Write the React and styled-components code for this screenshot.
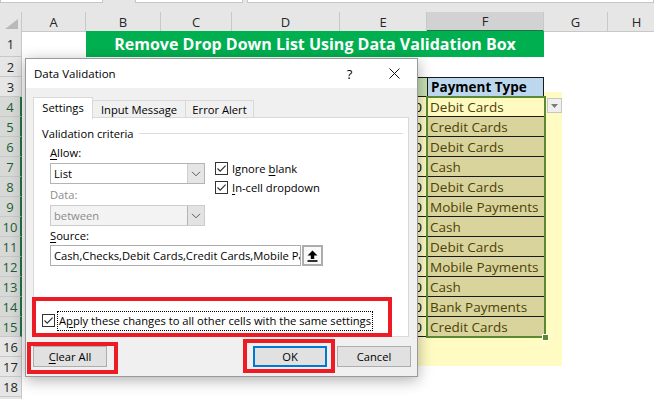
import React from "react";
import styled, { createGlobalStyle } from "styled-components";

const GlobalStyle = createGlobalStyle`
  html, body {
    margin: 0;
    padding: 0;
    background: #ffffff;
  }
  body {
    width: 654px;
    height: 399px;
    overflow: hidden;
    font-family: "Open Sans", "Noto Sans", sans-serif;
  }
  * {
    box-sizing: border-box;
  }
`;

const COLS = "22px 64px 75px 71px 108px 87px 117px 64px 58px";

const Sheet = styled.div`
  position: relative;
  width: 654px;
  height: 399px;
  overflow: hidden;
  background: #ffffff;
`;

const Grid = styled.div`
  position: relative;
  z-index: 1;
  display: flex;
  flex-direction: column;
`;

const TopStrip = styled.div`
  display: flex;
  height: 12px;
  background: #e6e6e6;
`;

const FormulaBox = styled.div`
  width: ${({ $w }) => ($w ? `${$w}px` : "auto")};
  flex: ${({ $w }) => ($w ? "none" : 1)};
  margin-left: ${({ $ml }) => $ml || 0}px;
  height: 3px;
  background: #ffffff;
  border: 1px solid #c6c6c6;
  border-top: none;
`;

const Row = styled.div`
  display: grid;
  grid-template-columns: ${COLS};
  height: ${({ $h }) => $h}px;
`;

const Corner = styled.div`
  display: flex;
  align-items: flex-end;
  justify-content: flex-end;
  padding: 0 3px 2px 0;
  background: #e6e6e6;
  border-right: 1px solid #c8c8c8;
  border-bottom: 1px solid #c8c8c8;
`;

const ColHeader = styled.div`
  display: flex;
  align-items: center;
  justify-content: center;
  background: ${({ $sel }) => ($sel ? "#d2d2d2" : "#e6e6e6")};
  border-right: 1px solid #c8c8c8;
  border-bottom: ${({ $sel }) => ($sel ? "2px solid #217346" : "1px solid #c8c8c8")};
  font-size: 13px;
  color: #262626;
`;

const RowHeader = styled.div`
  display: flex;
  align-items: center;
  justify-content: center;
  background: ${({ $sel }) => ($sel ? "#d6d9d6" : "#e6e6e6")};
  border-bottom: 1px solid #c8c8c8;
  border-right: ${({ $sel }) => ($sel ? "2px solid #217346" : "1px solid #c8c8c8")};
  font-size: 13px;
  color: ${({ $sel }) => ($sel ? "#1e5c38" : "#262626")};
`;

const Cell = styled.div`
  display: flex;
  align-items: center;
  justify-content: ${({ $align }) =>
    $align === "right" ? "flex-end" : $align === "center" ? "center" : "flex-start"};
  padding: 0 ${({ $pr }) => $pr || 3}px 0 3px;
  grid-column: ${({ $span }) => $span || "auto"};
  background: ${({ $bg }) => $bg || "transparent"};
  color: ${({ $color }) => $color || "#000000"};
  font-size: ${({ $size }) => $size || 13.5}px;
  font-weight: ${({ $bold }) => ($bold ? 700 : 400)};
  border-top: ${({ $bt }) => ($bt ? "1px solid #1a1a1a" : "none")};
  border-bottom: ${({ $bb }) => ($bb ? "1px solid #1a1a1a" : "none")};
  border-left: ${({ $bx }) => ($bx ? "1px solid #1a1a1a" : "none")};
  border-right: ${({ $bx }) => ($bx ? "1px solid #1a1a1a" : "none")};
  white-space: nowrap;
  overflow: hidden;
`;

const Highlight = styled.div`
  position: absolute;
  z-index: 0;
  left: 405px;
  top: 92px;
  width: 157px;
  height: 274px;
  background: #fffbc3;
`;

const Selection = styled.div`
  position: absolute;
  z-index: 2;
  left: 426px;
  top: 96px;
  width: 120px;
  height: 242px;
  border: 2px solid #5b8a32;
`;

const FillHandle = styled.div`
  position: absolute;
  right: -5px;
  bottom: -5px;
  width: 7px;
  height: 7px;
  background: #5b8a32;
  border: 1px solid #ffffff;
`;

const DropButton = styled.div`
  position: absolute;
  z-index: 2;
  left: 547px;
  top: 98px;
  width: 15px;
  height: 15px;
  display: flex;
  align-items: center;
  justify-content: center;
  background: #efefef;
  border: 1px solid #c6c6c6;
`;

const Dialog = styled.div`
  position: absolute;
  z-index: 5;
  left: 25px;
  top: 58px;
  width: 393px;
  height: 319px;
  display: flex;
  flex-direction: column;
  background: #f0f0f0;
  border: 1px solid #9a9a9a;
  box-shadow: 0 3px 14px rgba(0, 0, 0, 0.32);
  font-family: "Open Sans", "Noto Sans", sans-serif;
  font-size: 11.2px;
  color: #000000;
`;

const TitleBar = styled.div`
  display: flex;
  align-items: center;
  height: 29px;
  background: #ffffff;
  padding-left: 8px;
`;

const TitleText = styled.div`
  flex: 1;
  font-size: 11.5px;
`;

const TitleButton = styled.div`
  width: 45px;
  height: 29px;
  display: flex;
  align-items: center;
  justify-content: center;
  font-size: 13px;
`;

const Body = styled.div`
  flex: 1;
  display: flex;
  flex-direction: column;
  padding: 8px 8px 9px 7px;
`;

const TabRow = styled.div`
  display: flex;
  align-items: flex-end;
  height: 22px;
  position: relative;
  z-index: 1;
`;

const Tab = styled.div`
  width: ${({ $w }) => $w}px;
  height: ${({ $active }) => ($active ? 22 : 18)}px;
  display: flex;
  align-items: center;
  justify-content: center;
  background: ${({ $active }) => ($active ? "#ffffff" : "#f0f0f0")};
  border: 1px solid #d9d9d9;
  border-bottom: ${({ $active }) => ($active ? "none" : "1px solid #d9d9d9")};
  border-left: ${({ $first, $active }) => ($first || $active ? "1px solid #d9d9d9" : "none")};
  margin-bottom: ${({ $active }) => ($active ? -1 : 0)}px;
  padding-bottom: ${({ $active }) => ($active ? 2 : 0)}px;
`;

const Panel = styled.div`
  height: 220px;
  margin-top: -1px;
  display: flex;
  flex-direction: column;
  background: #ffffff;
  border: 1px solid #d9d9d9;
  padding: 8px 5px 6px 8px;
`;

const GroupTitle = styled.div`
  display: flex;
  align-items: center;
  gap: 5px;
  height: 14px;
  &::after {
    content: "";
    flex: 1;
    height: 1px;
    background: #dcdcdc;
  }
`;

const Criteria = styled.div`
  display: flex;
  flex-direction: column;
  margin-left: 8px;
`;

const CriteriaTop = styled.div`
  display: flex;
  gap: 10px;
`;

const LeftCol = styled.div`
  width: 155px;
  display: flex;
  flex-direction: column;
`;

const FieldLabel = styled.div`
  height: 14px;
  line-height: 14px;
  margin-top: ${({ $mt }) => $mt}px;
  color: ${({ $disabled }) => ($disabled ? "#8c8c8c" : "#000000")};
`;

const Combo = styled.div`
  display: flex;
  height: 21px;
  margin-top: 3px;
  background: ${({ $disabled }) => ($disabled ? "#f3f3f3" : "#ffffff")};
  border: 1px solid ${({ $disabled }) => ($disabled ? "#cccccc" : "#b4b4b4")};
  color: ${({ $disabled }) => ($disabled ? "#8c8c8c" : "#000000")};
`;

const ComboText = styled.div`
  flex: 1;
  display: flex;
  align-items: center;
  padding-left: 3px;
`;

const ComboArrow = styled.div`
  width: 17px;
  display: flex;
  align-items: center;
  justify-content: center;
  background: ${({ $disabled }) => ($disabled ? "#e3e3e3" : "#e5e5e5")};
  border-left: 1px solid ${({ $disabled }) => ($disabled ? "#b4b4b4" : "#cfcfcf")};
`;

const CheckList = styled.div`
  display: flex;
  flex-direction: column;
  padding-top: 19px;
`;

const CheckRow = styled.div`
  display: flex;
  align-items: center;
  gap: ${({ $gap }) => $gap || 4}px;
  height: ${({ $h }) => $h || 18}px;
`;

const Box = styled.div`
  width: 13px;
  height: 13px;
  flex: none;
  display: flex;
  align-items: center;
  justify-content: center;
  background: #ffffff;
  border: 1px solid #333333;
`;

const FocusText = styled.span`
  padding: 1px 1px 2px;
  border: 1px dotted #000000;
`;

const U = styled.span`
  text-decoration: underline;
  text-underline-offset: 2px;
`;

const SourceRow = styled.div`
  display: flex;
  gap: 1px;
  height: 21px;
  margin-top: 2px;
`;

const SourceInput = styled.div`
  width: 251px;
  display: flex;
  align-items: center;
  padding-left: 3px;
  background: #ffffff;
  border: 1px solid #adadad;
  white-space: nowrap;
  overflow: hidden;
`;

const RefButton = styled.div`
  width: 21px;
  display: flex;
  align-items: center;
  justify-content: center;
  background: #f9f9f9;
  border: 2px solid #adadad;
`;

const ApplyRow = styled(CheckRow)`
  margin-top: auto;
  height: 19px;
`;

const ButtonRow = styled.div`
  display: flex;
  gap: 10px;
  margin-top: 9px;
  margin-right: -2px;
`;

const Button = styled.div`
  width: 74px;
  height: 21px;
  display: flex;
  align-items: center;
  justify-content: center;
  margin-left: ${({ $push }) => ($push ? "auto" : "0")};
  background: #e1e1e1;
  border: ${({ $default }) => ($default ? "2px solid #0078d7" : "1px solid #adadad")};
`;

const Mark = styled.div`
  position: absolute;
  z-index: 10;
  left: ${({ $x }) => $x}px;
  top: ${({ $y }) => $y}px;
  width: ${({ $w }) => $w}px;
  height: ${({ $h }) => $h}px;
  border: 4px solid #ed1c24;
`;

const payments = [
  "Debit Cards",
  "Credit Cards",
  "Debit Cards",
  "Cash",
  "Debit Cards",
  "Mobile Payments",
  "Cash",
  "Debit Cards",
  "Mobile Payments",
  "Cash",
  "Bank Payments",
  "Credit Cards",
];

const amounts = ["1,200", "850", "2,300", "400", "1,750", "960", "320", "1,100", "2,540", "700", "3,200", "1,480"];

const letters = ["A", "B", "C", "D", "E", "F", "G", "H"];

const Check = () => (
  <svg width="11" height="11" viewBox="0 0 11 11">
    <path d="M1.5 5.5 L4.2 8.2 L9.6 2.6" fill="none" stroke="#333" strokeWidth="1.2" />
  </svg>
);

const Chevron = () => (
  <svg width="10" height="6" viewBox="0 0 10 6">
    <path d="M1 0.8 L5 4.8 L9 0.8" fill="none" stroke="#5a5a5a" strokeWidth="1" />
  </svg>
);

const Empty = ({ n }) =>
  Array.from({ length: n }).map((_, i) => <Cell key={i} />);

const App = () => {
  return (
    <Sheet>
      <GlobalStyle />
      <Highlight />
      <Grid>
        <TopStrip>
          <FormulaBox $w={103} />
          <FormulaBox $w={108} $ml={32} />
          <FormulaBox $ml={4} />
        </TopStrip>
        <Row $h={19}>
          <Corner>
            <svg width="13" height="10" viewBox="0 0 13 10">
              <polygon points="13,0 13,10 0,10" fill="#b9b9b9" />
            </svg>
          </Corner>
          {letters.map((l) => (
            <ColHeader key={l} $sel={l === "F"}>
              {l}
            </ColHeader>
          ))}
        </Row>
        <Row $h={26}>
          <RowHeader>1</RowHeader>
          <Cell />
          <Cell $span="3 / 8" $bg="#00b050" $color="#ffffff" $bold $align="center" $size={16}>
            Remove Drop Down List Using Data Validation Box
          </Cell>
          <Empty n={2} />
        </Row>
        <Row $h={20}>
          <RowHeader>2</RowHeader>
          <Empty n={8} />
        </Row>
        <Row $h={20}>
          <RowHeader>3</RowHeader>
          <Empty n={4} />
          <Cell $bg="#c6e0b4" $bold $bt $bb $align="center">Amount</Cell>
          <Cell $bg="#bdd7ee" $bold $bt $bb $bx>Payment Type</Cell>
          <Empty n={2} />
        </Row>
        {payments.map((p, i) => (
          <Row $h={20} key={i}>
            <RowHeader $sel>{i + 4}</RowHeader>
            <Empty n={4} />
            <Cell $bb $align="right" $pr={5}>{amounts[i]}.00</Cell>
            <Cell $bb $bg={i === 0 ? "#fffac0" : "#d8d49b"} $color="#4d4108">
              {p}
            </Cell>
            <Empty n={2} />
          </Row>
        ))}
        {[16, 17, 18].map((n) => (
          <Row $h={20} key={n}>
            <RowHeader>{n}</RowHeader>
            <Empty n={8} />
          </Row>
        ))}
        <Row $h={20}>
          <RowHeader />
          <Empty n={8} />
        </Row>
      </Grid>

      <Selection>
        <FillHandle />
      </Selection>
      <DropButton>
        <svg width="7" height="4" viewBox="0 0 7 4">
          <polygon points="0,0 7,0 3.5,4" fill="#7a7a7a" />
        </svg>
      </DropButton>

      <Dialog>
        <TitleBar>
          <TitleText>Data Validation</TitleText>
          <TitleButton>?</TitleButton>
          <TitleButton>
            <svg width="11" height="11" viewBox="0 0 11 11">
              <path d="M0.5 0.5 L10.5 10.5 M10.5 0.5 L0.5 10.5" stroke="#111" strokeWidth="1" />
            </svg>
          </TitleButton>
        </TitleBar>
        <Body>
          <TabRow>
            <Tab $w={60} $active $first>Settings</Tab>
            <Tab $w={93}>Input Message</Tab>
            <Tab $w={68}>Error Alert</Tab>
          </TabRow>
          <Panel>
            <GroupTitle>Validation criteria</GroupTitle>
            <Criteria>
              <CriteriaTop>
                <LeftCol>
                  <FieldLabel $mt={6}>
                    <U>A</U>llow:
                  </FieldLabel>
                  <Combo>
                    <ComboText>List</ComboText>
                    <ComboArrow>
                      <Chevron />
                    </ComboArrow>
                  </Combo>
                  <FieldLabel $mt={4} $disabled>
                    Data:
                  </FieldLabel>
                  <Combo $disabled>
                    <ComboText>between</ComboText>
                    <ComboArrow $disabled>
                      <Chevron />
                    </ComboArrow>
                  </Combo>
                </LeftCol>
                <CheckList>
                  <CheckRow $h={19}>
                    <Box>
                      <Check />
                    </Box>
                    <span>
                      Ignore <U>b</U>lank
                    </span>
                  </CheckRow>
                  <CheckRow $h={19}>
                    <Box>
                      <Check />
                    </Box>
                    <span>
                      <U>I</U>n-cell dropdown
                    </span>
                  </CheckRow>
                </CheckList>
              </CriteriaTop>
              <FieldLabel $mt={3}>
                <U>S</U>ource:
              </FieldLabel>
              <SourceRow>
                <SourceInput>Cash,Checks,Debit Cards,Credit Cards,Mobile Payments,Bank Payments</SourceInput>
                <RefButton>
                  <svg width="11" height="12" viewBox="0 0 11 12">
                    <path d="M5.5 0.5 L10.5 5.5 H7.2 V9 H3.8 V5.5 H0.5 Z" fill="#000" />
                    <path d="M0.5 11 H10.5" stroke="#000" strokeWidth="1.6" />
                  </svg>
                </RefButton>
              </SourceRow>
            </Criteria>
            <ApplyRow $gap={2}>
              <Box>
                <Check />
              </Box>
              <FocusText>
                A<U>p</U>ply these changes to all other cells with the same settings
              </FocusText>
            </ApplyRow>
          </Panel>
          <ButtonRow>
            <Button>
              <span>
                <U>C</U>lear All
              </span>
            </Button>
            <Button $push $default>OK</Button>
            <Button>Cancel</Button>
          </ButtonRow>
        </Body>
      </Dialog>

      <Mark $x={32} $y={297} $w={360} $h={40} />
      <Mark $x={27} $y={342} $w={91} $h={32} />
      <Mark $x={243} $y={339} $w={92} $h={34} />
    </Sheet>
  );
};

export default App;
